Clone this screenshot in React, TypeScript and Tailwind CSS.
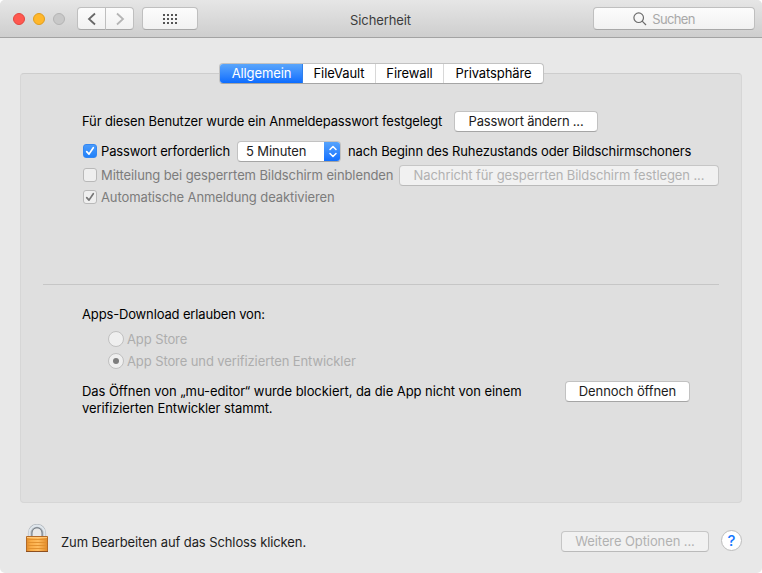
import React from "react";

function PushButton({ children, className = "", disabled = false }: { children: React.ReactNode; className?: string; disabled?: boolean }) {
  return (
    <button
      className={`flex h-[21px] shrink-0 items-center justify-center whitespace-nowrap rounded-[4px] border ${
        disabled
          ? "border-[#c6c6c6] border-b-[#bababa] bg-[#f1f1f1] text-[#b1b1b1]"
          : "border-[#c2c2c2] border-b-[#a5a5a5] bg-white text-[#1c1c1c]"
      } ${className}`}
    >
      {children}
    </button>
  );
}

function Check({ checked = false, active = false }: { checked?: boolean; active?: boolean }) {
  return (
    <span
      className={`mb-px flex size-[14px] shrink-0 items-center justify-center rounded-[3px] border ${
        active ? "border-[#3387f3] bg-gradient-to-b from-[#4a9bfb] to-[#2081fa]" : "border-[#b9b9b9] bg-[#efefef]"
      }`}
    >
      {checked && (
        <svg width="10" height="10" viewBox="0 0 10 10" fill="none" stroke={active ? "#fff" : "#777"} strokeWidth="1.7" strokeLinecap="round" strokeLinejoin="round">
          <path d="M1.7 5.6 4 8.1 8.3 1.7" />
        </svg>
      )}
    </span>
  );
}

function Radio({ selected = false }: { selected?: boolean }) {
  return (
    <span className="flex size-4 shrink-0 items-center justify-center rounded-full border border-[#c0c0c0] bg-[#efefef]">
      {selected && <span className="size-[6px] rounded-full bg-[#7d7d7d]" />}
    </span>
  );
}

function Padlock() {
  return (
    <svg width="24" height="29" viewBox="0 0 24 29" className="shrink-0">
      <defs>
        <linearGradient id="brass" x1="0" y1="0" x2="1" y2="0">
          <stop offset="0" stopColor="#e08a2c" />
          <stop offset="0.2" stopColor="#f9ab45" />
          <stop offset="0.55" stopColor="#ffbc5e" />
          <stop offset="1" stopColor="#e18a2a" />
        </linearGradient>
      </defs>
      <path d="M4.9 13V9a7.1 7.1 0 0 1 14.2 0V13" fill="none" stroke="#aab0b6" strokeWidth="4" />
      <path d="M4.5 13V9a7.5 7.4 0 0 1 15 0V13" fill="none" stroke="#dfe6ec" strokeWidth="2.2" />
      <path d="M7 12V9a5 5.2 0 0 1 10 0V12" fill="none" stroke="#747d86" strokeWidth="1" />
      <path d="M1.5 12.5h21v15h-21z" fill="url(#brass)" stroke="#b36a28" />
      <path d="M2 15.5h20M2 18.5h20M2 21.5h20M2 24.5h20" stroke="#e2912f" strokeWidth="1" />
      <path d="M2 13.5h20" stroke="#ffc978" />
      <path d="M1 27.5h22" stroke="#8d4f1f" />
    </svg>
  );
}

const toolbarButton =
  "flex h-[23px] items-center justify-center border border-[#bfbfbf] border-b-[#a8a8a8] bg-gradient-to-b from-[#fcfcfc] to-[#f1f1f1]";

export default function App() {
  return (
    <div className="flex h-[573px] w-[762px] flex-col overflow-hidden rounded-[5px] bg-[#e8e8e8] font-['Inter','Liberation_Sans',sans-serif] text-[13px] leading-[17px] tracking-[-0.1px] text-black">
      <header className="grid h-[38px] shrink-0 grid-cols-[1fr_auto_1fr] items-start border-b border-[#a3a3a3] bg-gradient-to-b from-[#e6e6e6] to-[#cecece] pt-[7px]">
        <div className="flex">
          <div className="flex gap-2 pl-[13px] pt-[6px]">
            <span className="size-3 rounded-full border border-[#e2463f] bg-[#ff5850]" />
            <span className="size-3 rounded-full border border-[#df9d1d] bg-[#ffb72b]" />
            <span className="size-3 rounded-full border border-[#b4b4b4] bg-[#c8c8c8]" />
          </div>
          <button className={`${toolbarButton} ml-3 w-[29px] rounded-l-[4px]`}>
            <svg width="10" height="14" viewBox="0 0 10 14" fill="none" stroke="#686868" strokeWidth="1.8"><path d="M8 1.5 2 7l6 5.5" /></svg>
          </button>
          <button className={`${toolbarButton} -ml-px w-[29px] rounded-r-[4px]`}>
            <svg width="10" height="14" viewBox="0 0 10 14" fill="none" stroke="#b5b5b5" strokeWidth="1.8"><path d="m2 1.5 6 5.5-6 5.5" /></svg>
          </button>
          <button className={`${toolbarButton} ml-2 w-14 rounded-[4px]`}>
            <svg width="14" height="10" viewBox="0 0 14 10" className="mt-px" fill="#555" shapeRendering="crispEdges">
              {[0, 4, 8].map((y) => [0, 4, 8, 12].map((x) => <rect key={`${x}-${y}`} x={x} y={y} width="2" height="2" />))}
            </svg>
          </button>
        </div>
        <h1 className="pr-px pt-[5px] text-[#3c3c3c]">Sicherheit</h1>
        <div className={`${toolbarButton} mr-[7px] w-[162px] justify-self-end gap-[5px] rounded-[4px] pr-5 text-[#a8a8a8]`}>
          <svg width="14" height="14" viewBox="0 0 14 14" fill="none" stroke="#6c6c6c" strokeWidth="1.2"><circle cx="5.7" cy="5.7" r="4.8" /><path d="m9.2 9.2 3.8 3.8" /></svg>
          <span className="pt-px tracking-[-0.65px]">Suchen</span>
        </div>
      </header>

      <main className="relative mx-5 mt-[35px] h-[430px] shrink-0 rounded-[4px] border border-[#d6d6d6] border-t-[#cdcdcd] bg-[#dfdfdf]">
        <nav className="absolute left-[198px] top-[-11px] flex h-[21px] w-[325px] overflow-hidden rounded-[4px] border border-[#c2c2c2] border-b-[#a5a5a5] bg-white">
          <button className="-mb-px -ml-px -mt-px w-[84px] shrink-0 border border-[#2f80ec] border-b-[#1259dc] bg-gradient-to-b from-[#59a5fb] to-[#0a6cff] pl-px text-white">Allgemein</button>
          <button className="w-[73px] border-r border-[#d8d8d8]">FileVault</button>
          <button className="w-[68px] border-r border-[#d8d8d8]">Firewall</button>
          <button className="flex-1">Privatsphäre</button>
        </nav>

        <section className="flex flex-col whitespace-nowrap pl-[61px] pt-[37px]">
          <div className="flex h-[21px] items-center">
            <span className="w-[372px] tracking-[-0.125px]">Für diesen Benutzer wurde ein Anmeldepasswort festgelegt</span>
            <PushButton className="w-[144px] tracking-[-0.2px]">Passwort ändern ...</PushButton>
          </div>
          <div className="mt-[9px] flex h-[21px] items-center">
            <span className="flex w-[155px] items-center gap-1 pl-px"><Check checked active /><span className="tracking-[-0.15px]">Passwort erforderlich</span></span>
            <button className="flex h-[21px] w-[104px] items-center overflow-hidden rounded-[4px] border border-[#c2c2c2] border-b-[#a5a5a5] bg-white pl-2 text-[#222]">
              <span>5 Minuten</span>
              <span className="-mr-px ml-auto flex h-[21px] w-[17px] items-center justify-center bg-gradient-to-b from-[#59a5fb] to-[#0a6cff]">
                <svg width="10" height="13" viewBox="0 0 10 13" fill="none" stroke="#fff" strokeWidth="1.5" strokeLinecap="round" strokeLinejoin="round"><path d="m2 4.5 3-3 3 3M2 8.5l3 3 3-3" /></svg>
              </span>
            </button>
            <span className="ml-[7px] tracking-[-0.125px]">nach Beginn des Ruhezustands oder Bildschirmschoners</span>
          </div>
          <div className="mt-[3px] flex h-[21px] items-center text-[#7c7c7c]">
            <span className="flex w-[317px] items-center gap-1 pl-px"><Check /><span>Mitteilung bei gesperrtem Bildschirm einblenden</span></span>
            <PushButton disabled className="w-[320px]">Nachricht für gesperrten Bildschirm festlegen ...</PushButton>
          </div>
          <div className="mt-px flex h-[21px] items-center gap-1 pl-px text-[#7c7c7c]"><Check checked /><span>Automatische Anmeldung deaktivieren</span></div>
        </section>

        <hr className="ml-[22px] mt-[76px] w-[676px] border-[#c6c6c6]" />

        <section className="pl-[61px] pt-[21px]">
          <h2 className="tracking-[-0.15px]">Apps-Download erlauben von:</h2>
          <div className="flex flex-col gap-[6px] pl-[26px] pt-2 text-[#adadad]">
            <span className="flex h-4 items-center gap-[3px]"><Radio /><span>App Store</span></span>
            <span className="flex h-4 items-center gap-[3px]"><Radio selected /><span>App Store und verifizierten Entwickler</span></span>
          </div>
          <div className="flex whitespace-nowrap pt-[12px]">
            <p className="w-[483px] pt-[2px] tracking-[-0.06px]">Das Öffnen von „mu-editor“ wurde blockiert, da die App nicht von einem<br /><span className="tracking-[-0.1px]">verifizierten Entwickler stammt.</span></p>
            <PushButton className="w-[125px]">Dennoch öffnen</PushButton>
          </div>
        </section>
      </main>

      <footer className="flex items-start pl-[25px] pt-[21px]">
        <Padlock />
        <span className="ml-3 mt-[10px] text-[#1e1e1e]">Zum Bearbeiten auf das Schloss klicken.</span>
        <PushButton disabled className="ml-auto mt-[7px] w-[148px]">Weitere Optionen ...</PushButton>
        <button className="ml-3 mr-5 mt-[6px] flex size-[21px] items-center justify-center rounded-full border border-[#bcbcbc] bg-white text-[15px] font-medium text-[#1477ff]">?</button>
      </footer>
    </div>
  );
}
